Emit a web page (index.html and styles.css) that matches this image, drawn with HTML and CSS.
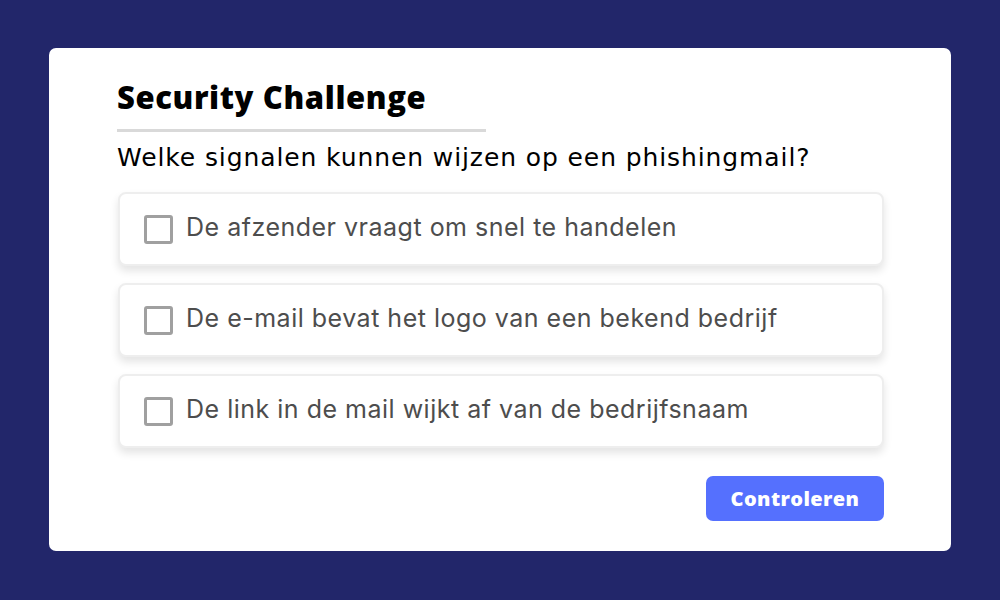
FILE: index.html
```html
<!DOCTYPE html>
<html>
<head>
<meta charset="utf-8">
<link rel="stylesheet" href="styles.css">
</head>
<body>
<div class="card">
  <h1 class="title">Security Challenge</h1>
  <div class="divider"></div>
  <p class="question">Welke signalen kunnen wijzen op een phishingmail?</p>
  <div class="options">
    <label class="option"><span class="box"></span><span class="text">De afzender vraagt om snel te handelen</span></label>
    <label class="option"><span class="box"></span><span class="text">De e-mail bevat het logo van een bekend bedrijf</span></label>
    <label class="option"><span class="box"></span><span class="text">De link in de mail wijkt af van de bedrijfsnaam</span></label>
  </div>
  <div class="actions">
    <button class="btn">Controleren</button>
  </div>
</div>
</body>
</html>
```
FILE: styles.css
```css
html, body {
  margin: 0;
  padding: 0;
}
body {
  width: 1000px;
  height: 600px;
  background: #22266a;
  padding: 48px 49px;
  box-sizing: border-box;
}
.card {
  background: #fff;
  border-radius: 7px;
  height: 503px;
  box-sizing: border-box;
  padding: 31px 67px 0 68px;
}
.title {
  margin: 0;
  font-family: "Open Sans", sans-serif;
  font-weight: 800;
  font-size: 31px;
  line-height: 36px;
  color: #000;
  letter-spacing: 0.6px;
}
.divider {
  width: 369px;
  height: 3px;
  background: #d9d9d9;
  margin-top: 14px;
}
.question {
  margin: 11px 0 0 0;
  font-family: "DejaVu Sans", sans-serif;
  font-size: 25px;
  line-height: 30px;
  color: #000;
  letter-spacing: 0.9px;
}
.options {
  margin-top: 19px;
  display: flex;
  flex-direction: column;
  gap: 17px;
}
.option {
  height: 74px;
  box-sizing: border-box;
  border: 2px solid #eeeeee;
  border-radius: 8px;
  background: #fff;
  box-shadow: 0 5px 8px rgba(0,0,0,0.11);
  display: flex;
  align-items: center;
  padding-left: 24px;
  margin-left: 1px;
}
.box {
  width: 29px;
  height: 29px;
  box-sizing: border-box;
  border: 3px solid #a0a0a0;
  border-radius: 3px;
  flex: none;
}
.text {
  margin-left: 13px;
  font-family: Inter, sans-serif;
  font-size: 25px;
  letter-spacing: 0.5px;
  color: #4d4d4d;
  position: relative;
  top: -2px;
}
.actions {
  display: flex;
  justify-content: flex-end;
  margin-top: 28px;
}
.btn {
  width: 178px;
  height: 45px;
  border: none;
  border-radius: 7px;
  background: #5570fe;
  color: #fff;
  font-family: "Open Sans", sans-serif;
  font-weight: 800;
  font-size: 20px;
  letter-spacing: 0.4px;
}
```
